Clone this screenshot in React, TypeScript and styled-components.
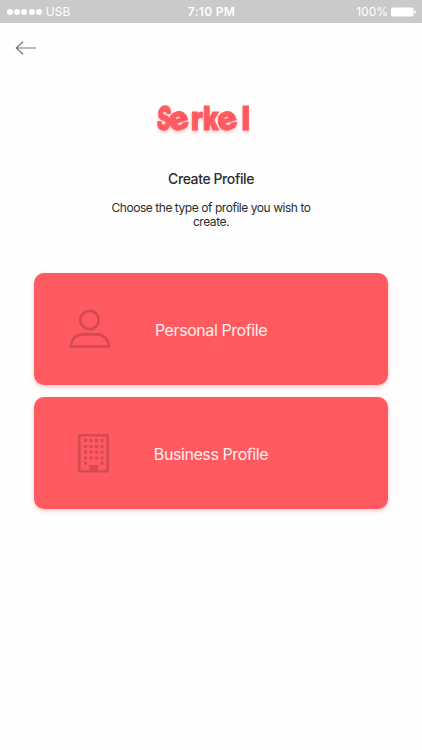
import React from "react";
import styled, { createGlobalStyle } from "styled-components";

const GlobalStyle = createGlobalStyle`
  * { box-sizing: border-box; }
  body { margin: 0; background: #fefefe; font-family: Inter, "Liberation Sans", sans-serif; }
`;

const Screen = styled.main`
  width: 422px;
  height: 750px;
  display: flex;
  flex-direction: column;
  overflow: hidden;
  background: #fefefe;
`;

const StatusBar = styled.header`
  height: 23px;
  flex: none;
  display: grid;
  grid-template-columns: 1fr auto 1fr;
  align-items: center;
  padding: 1px 6px 0 7px;
  background: #cacaca;
  color: #fff;
  font-size: 12px;
  line-height: 22px;
`;

const Carrier = styled.div`
  display: flex;
  align-items: center;
  gap: 4px;
`;

const Signal = styled.div`
  display: flex;
  gap: 1.2px;
`;

const Dot = styled.i`
  width: 6px;
  height: 6px;
  border-radius: 50%;
  background: #fff;
`;

const Clock = styled.span`
  font-weight: 600;
  font-size: 12px;
  letter-spacing: 0.3px;
`;

const Power = styled.div`
  display: flex;
  align-items: center;
  justify-content: flex-end;
  gap: 3px;
`;

const Nav = styled.nav`
  height: 50px;
  flex: none;
  display: flex;
  align-items: center;
  padding-left: 15px;
`;

const BackButton = styled.button`
  display: flex;
  padding: 0;
  border: 0;
  background: none;
`;

const Intro = styled.section`
  display: flex;
  flex-direction: column;
  align-items: center;
  height: 200px;
  flex: none;
  padding-top: 22px;
  color: #2c2c2c;
  text-align: center;
`;

const Logo = styled.svg`
  display: block;
  margin-right: 8px;
  overflow: visible;
  font: 900 33px Inter, sans-serif;
  fill: #ff5a5f;
  stroke: #ff5a5f;
  stroke-width: 0.8px;
  filter: drop-shadow(0 2px 1.5px rgba(255, 90, 95, 0.3));
`;

const Title = styled.h1`
  margin: 33px 0 0;
  font-size: 14px;
  line-height: 18px;
  font-weight: 500;
  letter-spacing: -0.4px;
`;

const Lead = styled.p`
  width: 220px;
  margin: 13px 0 0;
  font-size: 12px;
  line-height: 14.4px;
  letter-spacing: -0.45px;
`;

const Choices = styled.section`
  display: flex;
  flex-direction: column;
  gap: 12px;
  padding: 0 34px;
`;

const Choice = styled.button`
  height: 112px;
  display: grid;
  grid-template-columns: 112px 130px 1fr;
  align-items: center;
  padding: 0;
  border: 0;
  border-radius: 10px;
  background: #ff5a5f;
  color: #ffeeee;
  font: 400 16px/22px Inter, "Liberation Sans", sans-serif;
  box-shadow: 0 2px 4px rgba(255, 90, 95, 0.35);
`;

const IconSlot = styled.span<{ $left: number }>`
  display: flex;
  padding-left: ${(p) => p.$left}px;
`;

const Label = styled.span`
  padding-top: 1px;
  text-align: center;
  white-space: nowrap;
  letter-spacing: -0.42px;
`;

const PersonIcon = () => (
  <svg width="42" height="40" viewBox="0 0 42 40" fill="none" stroke="#d34a50" strokeWidth="2.7">
    <circle cx="20.5" cy="11" r="9.2" />
    <path d="M2 37.5C2.5 29.5 7.5 25.3 13.5 25.3H28C34 25.3 39.5 29.5 40 37.5Z" />
  </svg>
);

const BuildingIcon = () => (
  <svg width="32" height="39" viewBox="0 0 32 39" fill="#d34a50">
    <path d="M0 0H31V38.5H0ZM2.6 2.6V36.2H28.4V2.6Z" fillRule="evenodd" />
    {[5, 11, 16.7, 22.5, 27.7].map((y, row) =>
      [6, 11.5, 17, 22.5].map((x, col) =>
        row === 4 && (col === 1 || col === 2) ? null : (
          <rect key={`${x}-${y}`} x={x} y={y} width="3" height="3" />
        )
      )
    )}
    <path d="M11.3 31H19.8V37H11.3Z" />
  </svg>
);

const letters = [
  { glyph: "S", transform: "translate(4.2 35) skewX(-4) scale(.64 1)" },
  { glyph: "e", transform: "translate(19.5 37.3) rotate(-16) scale(1 1)" },
  { glyph: "r", transform: "translate(38.8 35) scale(.85 1)" },
  { glyph: "k", transform: "translate(50.7 35) scale(.8 1)" },
  { glyph: "e", transform: "translate(68 37.3) rotate(-16) scale(1 1)" },
  { glyph: "l", transform: "translate(89.4 35) scale(.88 1)" },
];

export default function App() {
  return (
    <Screen>
      <GlobalStyle />
      <StatusBar>
        <Carrier>
          <Signal>{[0, 1, 2, 3, 4].map((n) => <Dot key={n} />)}</Signal>
          <span>USB</span>
        </Carrier>
        <Clock>7:10 PM</Clock>
        <Power>
          <span>100%</span>
          <svg width="25" height="10" viewBox="0 0 25 10" fill="#fff">
            <rect x="0" y="0.5" width="22.5" height="9" rx="1.5" />
            <path d="M23.3 3.2Q25 3.5 25 5T23.3 6.8Z" />
          </svg>
        </Power>
      </StatusBar>
      <Nav>
        <BackButton aria-label="Back">
          <svg width="22" height="14" viewBox="0 0 22 14" fill="none" stroke="#777" strokeWidth="1.2">
            <path d="M1 7H21M8 0.7L1.2 7L8 13.3" />
          </svg>
        </BackButton>
      </Nav>
      <Intro>
        <Logo width="110" height="42" viewBox="0 0 110 42" role="img" aria-label="Serkel">
          {letters.map(({ glyph, transform }) => (
            <text key={transform} transform={transform}>{glyph}</text>
          ))}
        </Logo>
        <Title>Create Profile</Title>
        <Lead>Choose the type of profile you wish to create.</Lead>
      </Intro>
      <Choices>
        <Choice>
          <IconSlot $left={35}><PersonIcon /></IconSlot>
          <Label>Personal Profile</Label>
        </Choice>
        <Choice>
          <IconSlot $left={44}><BuildingIcon /></IconSlot>
          <Label>Business Profile</Label>
        </Choice>
      </Choices>
    </Screen>
  );
}
